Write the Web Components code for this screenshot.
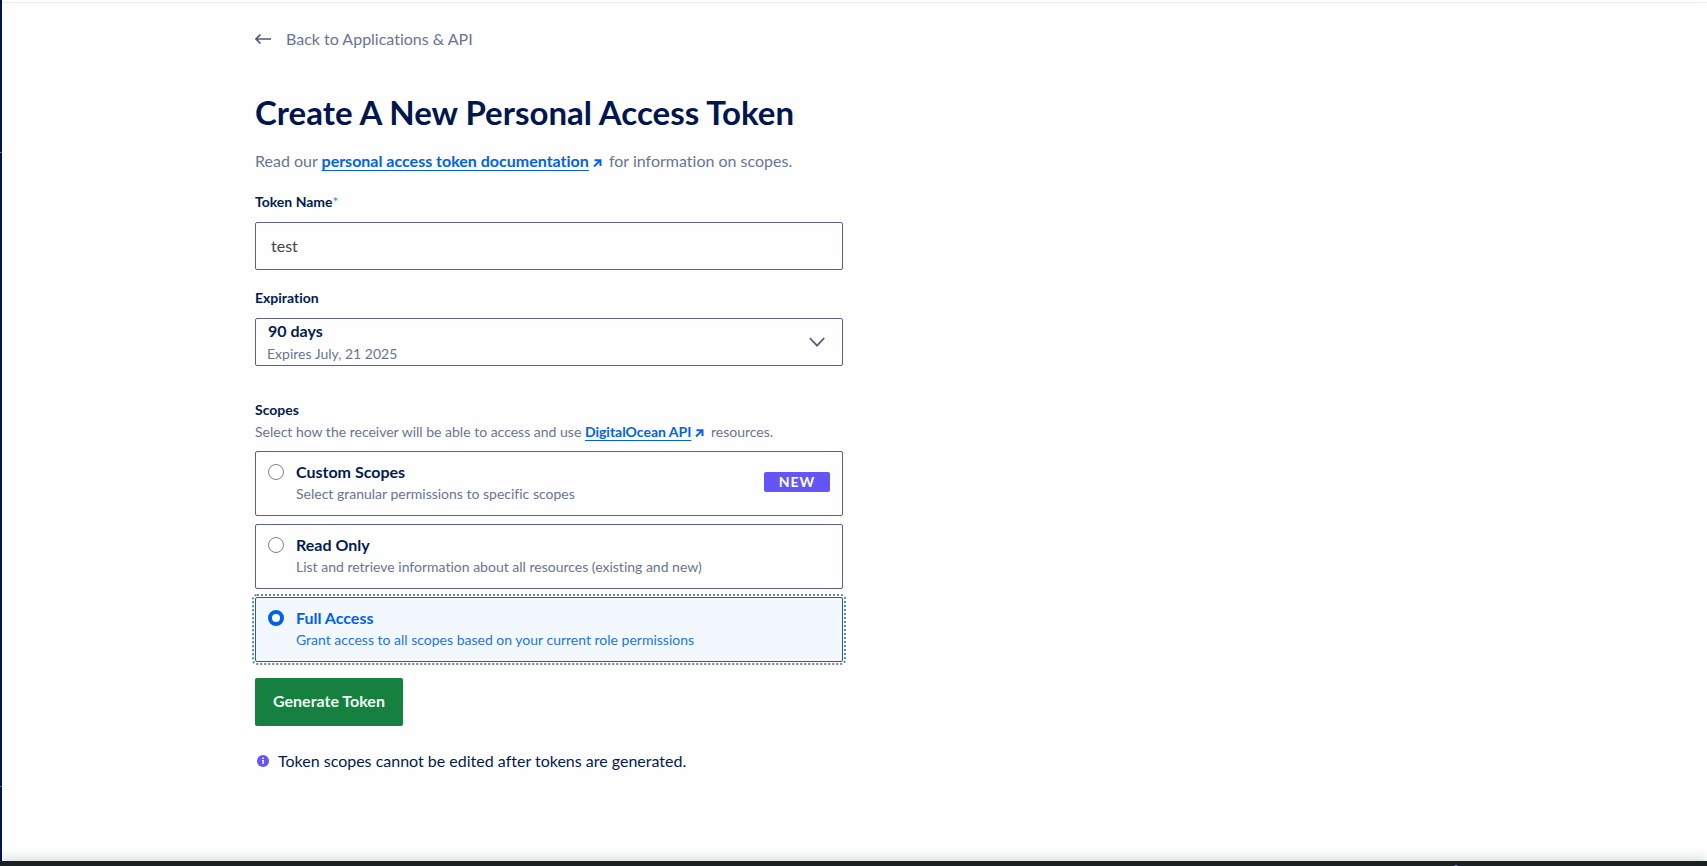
<!DOCTYPE html>
<html lang="en">
<head>
<meta charset="utf-8">
<meta name="viewport" content="width=device-width, initial-scale=1">
<title>Create A New Personal Access Token</title>
<style>
  :root {
    --navy: #031b4e;
    --heading: #00164d;
    --muted: #6b7490;
    --blue: #0061eb;
    --line: #5b6380;
    --violet: #6655f5;
    --green: #15803f;
  }
  body {
    margin: 0;
    background: #fefefe;
    color: var(--navy);
    font: 16px/24px Lato, "Open Sans", sans-serif;
    font-variant-ligatures: none;
  }
</style>
</head>
<body>
<app-shell>
  <back-link href="#applications">Back to Applications &amp; API</back-link>
  <token-form></token-form>
</app-shell>

<script>
class BaseElement extends HTMLElement {
  constructor() {
    super();
    this.attachShadow({ mode: 'open' }).innerHTML = this.template();
  }
}

customElements.define('app-shell', class extends BaseElement {
  template() {
    return `
      <style>
        :host { display: grid; grid-template: 1fr auto / 2px 1fr; min-height: 100vh; }
        aside { background: #00154f; display: flex; flex-direction: column; justify-content: space-between; padding: 152px 0 74px; box-sizing: border-box; }
        aside i { height: 1px; background: #5a6a94; }
        .page { display: flex; flex-direction: column; min-width: 0; }
        header { height: 2px; border-bottom: 1px solid #ededf0; box-shadow: 0 2px 12px rgba(3, 27, 78, .04); }
        main { flex: 1; width: 100%; max-width: 1199px; margin: 0 auto; padding: 24px 0; box-sizing: border-box; }
        .dock { grid-column: 1 / -1; height: 5px; background: #1b2122; box-shadow: 0 0 12px rgba(20, 40, 36, .35); }
        .dock svg { display: block; margin-left: auto; margin-right: 248px; }
      </style>
      <aside><i></i><i></i></aside>
      <div class="page">
        <header></header>
        <main><slot></slot></main>
      </div>
      <div class="dock"><svg width="6" height="5" aria-hidden="true"><circle cx="3" cy="6" r="2" fill="#9a90d8"/></svg></div>`;
  }
});

customElements.define('back-link', class extends BaseElement {
  template() {
    return `
      <style>
        :host { display: flex; }
        a { display: flex; align-items: center; gap: 15px; color: var(--muted); text-decoration: none; }
      </style>
      <a><svg width="16" height="12" viewBox="0 0 16 12" fill="none" stroke="#4f5978" stroke-width="1.7" aria-hidden="true"><path d="M16 6H1M5.500 1.500 1 6l4.500 4.500"/></svg><slot></slot></a>`;
  }
  connectedCallback() {
    this.shadowRoot.querySelector('a').href = this.getAttribute('href');
  }
});

customElements.define('doc-link', class extends BaseElement {
  template() {
    return `
      <style>
        :host { display: inline; }
        a { color: var(--blue); font-weight: 700; text-decoration: none; white-space: nowrap; }
        span { text-decoration: underline; text-underline-offset: 3px; text-decoration-thickness: 1px; text-decoration-skip-ink: none; }
        svg { margin: 0 3px 0 4px; }
      </style>
      <a><span><slot></slot></span><svg width="9" height="8" viewBox="0 0 9 8" fill="none" stroke="currentColor" stroke-width="2" aria-hidden="true"><path d="M1.500 1.200H7.500V7M7.300 1.400 1 7.500"/></svg></a>`;
  }
  connectedCallback() {
    this.shadowRoot.querySelector('a').href = this.getAttribute('href');
  }
});

customElements.define('new-badge', class extends BaseElement {
  template() {
    return `
      <style>
        :host { display: block; width: 66px; border-radius: 2px; background: var(--violet); color: #fff; font-size: 14px; line-height: 20px; font-weight: 700; letter-spacing: 1px; text-align: center; }
      </style>
      <slot></slot>`;
  }
});

customElements.define('token-form', class extends BaseElement {
  template() {
    return `
      <style>
        :host { display: block; max-width: 588px; }
        h1 { margin: 41px 0 17px; color: var(--heading); font-size: 33px; line-height: 40px; font-weight: 700; }
        p { margin: 0 0 19px; color: var(--muted); }
        .field { display: grid; gap: 10px; margin-bottom: 18px; }
        .label, legend { font-size: 14px; line-height: 20px; font-weight: 700; padding: 0; }
        .label span { color: #3b8bf0; font-weight: 400; }
        input[type=text], select {
          width: 100%; height: 48px; box-sizing: border-box; border: 1px solid var(--line); border-radius: 2px;
          background: #fefefe; font: inherit; margin: 0; outline: 0;
        }
        input[type=text] { padding: 0 15px 2px; color: #444; }
        .picker { display: grid; align-items: center; }
        .picker > * { grid-area: 1 / 1; }
        select { appearance: none; padding: 0 48px 22px 12px; color: var(--navy); font-weight: 700; }
        .picker small { align-self: end; padding: 0 0 2px 12px; pointer-events: none; }
        .picker svg { justify-self: end; margin-right: 18px; pointer-events: none; }
        small { color: var(--muted); font-size: 14px; line-height: 20px; }
        fieldset { border: 0; padding: 0; margin: 34px 0 0; min-width: 0; }
        fieldset p { margin: 2px 0 9px; font-size: 14px; line-height: 20px; }
        .options { display: grid; gap: 8px; }
        .option {
          display: grid; grid-template-columns: 16px 1fr auto; column-gap: 12px; align-items: center;
          border: 1px solid var(--line); border-radius: 2px; padding: 8px 12px 11px;
        }
        .option strong { font-weight: 700; }
        .option small { grid-area: 2 / 2; }
        .option new-badge { grid-area: 1 / 3 / 3 / 4; }
        input[type=radio] { appearance: none; width: 16px; height: 16px; margin: 0; box-sizing: border-box; border: 1px solid #7d8396; border-radius: 50%; background: #fff; outline: 0; }
        input[type=radio]:checked { border: 4px solid var(--blue); }
        .option:has(:checked) { border-color: #0a66b8; background: #f3f8ff; color: var(--blue); outline: 2px dotted #6a83a0; outline-offset: 1px; }
        .option:has(:checked) small { color: #2574dd; }
        button { display: block; height: 48px; margin: 16px 0 23px; padding: 0 18px 2px; border: 0; border-radius: 2px; background: var(--green); color: #effaf2; font: inherit; font-weight: 700; }
        .note { display: flex; align-items: center; gap: 9px; padding-left: 2px; }
      </style>
      <h1>Create A New Personal Access Token</h1>
      <p>Read our <doc-link href="#token-docs">personal access token documentation</doc-link> for information on scopes.</p>
      <form>
        <div class="field">
          <label class="label" for="name">Token Name<span>*</span></label>
          <input type="text" id="name" value="test">
        </div>
        <div class="field">
          <label class="label" for="expiry">Expiration</label>
          <div class="picker">
            <select id="expiry" aria-describedby="expires"><option>90 days</option></select>
            <small id="expires">Expires July, 21 2025</small>
            <svg width="16" height="10" viewBox="0 0 16 10" fill="none" stroke="#555b75" stroke-width="1.8" aria-hidden="true"><path d="m.8 1 7.2 7.6L15.200 1"/></svg>
          </div>
        </div>
        <fieldset>
          <legend>Scopes</legend>
          <p>Select how the receiver will be able to access and use <doc-link href="#api">DigitalOcean API</doc-link> resources.</p>
          <div class="options">
            <label class="option"><input type="radio" name="scope"><strong>Custom Scopes</strong><small>Select granular permissions to specific scopes</small><new-badge>NEW</new-badge></label>
            <label class="option"><input type="radio" name="scope"><strong>Read Only</strong><small>List and retrieve information about all resources (existing and new)</small></label>
            <label class="option"><input type="radio" name="scope" checked><strong>Full Access</strong><small>Grant access to all scopes based on your current role permissions</small></label>
          </div>
        </fieldset>
        <button type="button">Generate Token</button>
      </form>
      <div class="note">
        <svg width="12" height="12" viewBox="0 0 12 12" aria-hidden="true"><circle cx="6" cy="6" r="6" fill="#6655f5"/><path d="M5.200 2.500h1.600v1.500H5.200zM5 5h1.800v4H5.400V6H5z" fill="#fff"/></svg>
        <span>Token scopes cannot be edited after tokens are generated.</span>
      </div>`;
  }
});
</script>
</body>
</html>
